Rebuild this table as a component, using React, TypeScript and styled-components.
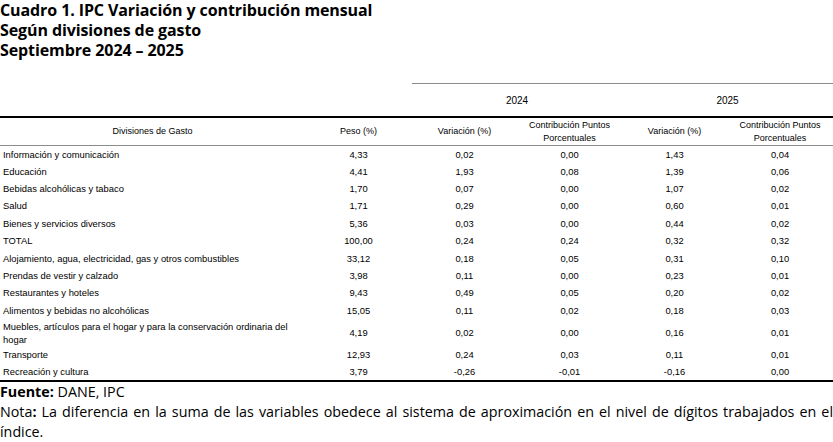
import styled, { createGlobalStyle } from "styled-components";

const GlobalStyle = createGlobalStyle`
  html, body {
    margin: 0;
    padding: 0;
    background: #ffffff;
  }
`;

// Column widths taken from the screenshot (total 833px).
const COLUMNS = "305px 107px 105px 105px 105px 106px";

const Page = styled.div`
  width: 833px;
  height: 442px;
  overflow: hidden;
  color: #000;
`;

const Title = styled.h1`
  margin: 0;
  font-family: "Open Sans", "Noto Sans", sans-serif;
  font-weight: 700;
  font-size: 16px;
  line-height: 20px;
  letter-spacing: -0.1px;
`;

const Table = styled.div`
  margin-top: 23px;
  font-family: "Liberation Sans", Arial, sans-serif;
  font-size: 9.4px;
`;

const YearRow = styled.div`
  display: grid;
  grid-template-columns: ${COLUMNS};
  height: 35px;
  box-sizing: border-box;
  border-bottom: 2px solid #000;
`;

const YearCell = styled.div<{ $empty?: boolean }>`
  grid-column: span 2;
  display: flex;
  align-items: center;
  justify-content: center;
  border-top: ${(p) => (p.$empty ? "none" : "1px solid #8c8c8c")};
  font-size: 10px;
`;

const HeaderRow = styled.div`
  display: grid;
  grid-template-columns: ${COLUMNS};
  height: 28px;
  box-sizing: border-box;
  border-bottom: 1px solid #8c8c8c;
`;

const HeaderCell = styled.div`
  display: flex;
  align-items: center;
  justify-content: center;
  text-align: center;
  line-height: 13px;
  font-size: 9px;
`;

const Row = styled.div<{ $h: number; $last?: boolean }>`
  display: grid;
  grid-template-columns: ${COLUMNS};
  height: ${(p) => p.$h}px;
  box-sizing: border-box;
  border-bottom: ${(p) => (p.$last ? "2px solid #000" : "none")};
`;

const Label = styled.div`
  display: flex;
  align-items: center;
  padding-left: 3px;
  line-height: 13px;
`;

const Num = styled.div`
  display: flex;
  align-items: center;
  justify-content: center;
`;

const Footer = styled.div`
  font-family: "Open Sans", "Noto Sans", sans-serif;
  font-size: 14.3px;
  line-height: 20px;
`;

const FootLine = styled.p`
  margin: 0;
  text-align: justify;
`;

type Item = {
  name: string;
  peso: string;
  v24: string;
  c24: string;
  v25: string;
  c25: string;
  h: number;
  wrap?: [string, string];
};

const rows: Item[] = [
  { name: "Información y comunicación", peso: "4,33", v24: "0,02", c24: "0,00", v25: "1,43", c25: "0,04", h: 17 },
  { name: "Educación", peso: "4,41", v24: "1,93", c24: "0,08", v25: "1,39", c25: "0,06", h: 17 },
  { name: "Bebidas alcohólicas y tabaco", peso: "1,70", v24: "0,07", c24: "0,00", v25: "1,07", c25: "0,02", h: 17 },
  { name: "Salud", peso: "1,71", v24: "0,29", c24: "0,00", v25: "0,60", c25: "0,01", h: 17 },
  { name: "Bienes y servicios diversos", peso: "5,36", v24: "0,03", c24: "0,00", v25: "0,44", c25: "0,02", h: 18 },
  { name: "TOTAL", peso: "100,00", v24: "0,24", c24: "0,24", v25: "0,32", c25: "0,32", h: 17 },
  { name: "Alojamiento, agua, electricidad, gas y otros combustibles", peso: "33,12", v24: "0,18", c24: "0,05", v25: "0,31", c25: "0,10", h: 18 },
  { name: "Prendas de vestir y calzado", peso: "3,98", v24: "0,11", c24: "0,00", v25: "0,23", c25: "0,01", h: 17 },
  { name: "Restaurantes y hoteles", peso: "9,43", v24: "0,49", c24: "0,05", v25: "0,20", c25: "0,02", h: 17 },
  { name: "Alimentos y bebidas no alcohólicas", peso: "15,05", v24: "0,11", c24: "0,02", v25: "0,18", c25: "0,03", h: 18 },
  {
    name: "",
    wrap: ["Muebles, artículos para el hogar y para la conservación ordinaria del", "hogar"],
    peso: "4,19", v24: "0,02", c24: "0,00", v25: "0,16", c25: "0,01", h: 27,
  },
  { name: "Transporte", peso: "12,93", v24: "0,24", c24: "0,03", v25: "0,11", c25: "0,01", h: 17 },
  { name: "Recreación y cultura", peso: "3,79", v24: "-0,26", c24: "-0,01", v25: "-0,16", c25: "0,00", h: 19 },
];

function App() {
  return (
    <Page>
      <GlobalStyle />
      <Title>
        Cuadro 1. IPC Variación y contribución mensual
        <br />
        Según divisiones de gasto
        <br />
        Septiembre 2024 – 2025
      </Title>

      <Table>
        <YearRow>
          <YearCell $empty />
          <YearCell>2024</YearCell>
          <YearCell>2025</YearCell>
        </YearRow>
        <HeaderRow>
          <HeaderCell>Divisiones de Gasto</HeaderCell>
          <HeaderCell>Peso (%)</HeaderCell>
          <HeaderCell>Variación (%)</HeaderCell>
          <HeaderCell>
            Contribución Puntos
            <br />
            Porcentuales
          </HeaderCell>
          <HeaderCell>Variación (%)</HeaderCell>
          <HeaderCell>
            Contribución Puntos
            <br />
            Porcentuales
          </HeaderCell>
        </HeaderRow>
        {rows.map((r, i) => (
          <Row key={i} $h={r.h} $last={i === rows.length - 1}>
            <Label>
              {r.wrap ? (
                <span>
                  {r.wrap[0]}
                  <br />
                  {r.wrap[1]}
                </span>
              ) : (
                r.name
              )}
            </Label>
            <Num>{r.peso}</Num>
            <Num>{r.v24}</Num>
            <Num>{r.c24}</Num>
            <Num>{r.v25}</Num>
            <Num>{r.c25}</Num>
          </Row>
        ))}
      </Table>

      <Footer>
        <FootLine>
          <b>Fuente:</b> DANE, IPC
        </FootLine>
        <FootLine>
          Nota<b>:</b> La diferencia en la suma de las variables obedece al sistema de aproximación en el nivel de
          dígitos trabajados en el índice.
        </FootLine>
      </Footer>
    </Page>
  );
}

export default App;
